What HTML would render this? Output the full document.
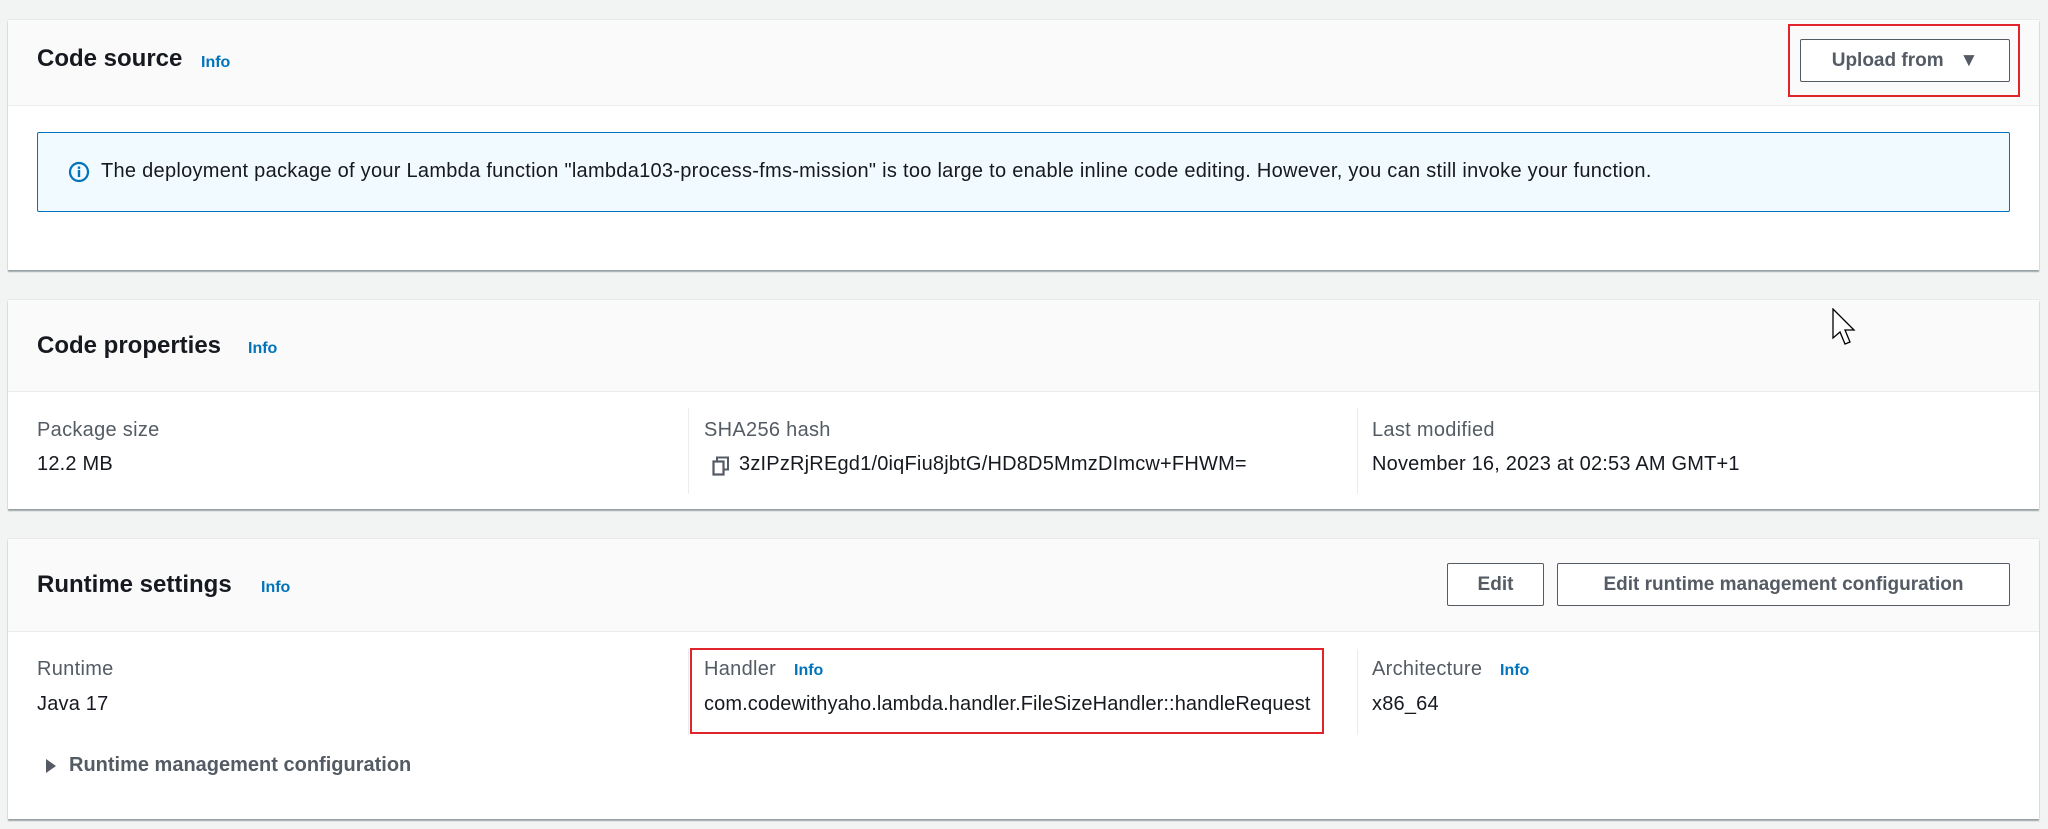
<!DOCTYPE html>
<html><head><meta charset="utf-8"><style>
*{margin:0;padding:0;box-sizing:border-box}
body{width:2048px;height:829px;background:#f2f3f3;font-family:"Liberation Sans",sans-serif;position:relative;overflow:hidden;color:#16191f}
.card{position:absolute;left:8px;width:2031px;background:#fff;box-shadow:0 2px 1px rgba(0,28,36,.35),0 0 1px rgba(0,28,36,.2)}
.hdr{position:absolute;left:0;top:0;width:100%;background:#fafafa;border-bottom:1px solid #eaeded}
.abs{position:absolute;white-space:nowrap}
.title{font-size:24px;font-weight:bold;color:#16191f}
.info{font-size:16px;font-weight:bold;color:#0073bb}
.lbl{font-size:20px;color:#545b64;letter-spacing:0.3px}
.val{font-size:20px;color:#16191f;letter-spacing:0.2px}
.btn{position:absolute;border:1px solid #545b64;border-radius:2px;background:#fff;font-size:19px;font-weight:bold;color:#545b64;display:flex;align-items:center;justify-content:center}
.div{position:absolute;width:1px;background:#eaeded}
.red{position:absolute;border:2px solid #e0242b}
</style></head><body>

<div class="card" style="top:20px;height:250px">
  <div class="hdr" style="height:86px"></div>
  <div class="abs title" style="left:29px;top:25px">Code source</div>
  <div class="abs info" style="left:193px;top:34px">Info</div>
  <div class="abs" style="left:29px;top:112px;width:1973px;height:80px;background:#f1faff;border:1px solid #0073bb;border-radius:2px"></div>
  <svg class="abs" style="left:60px;top:141px" width="22" height="22" viewBox="0 0 22 22"><circle cx="11" cy="11" r="9" fill="none" stroke="#0073bb" stroke-width="2.2"/><rect x="9.8" y="9" width="2.4" height="7" fill="#0073bb"/><rect x="9.8" y="5.5" width="2.4" height="2.4" fill="#0073bb"/></svg>
  <div class="abs val" style="left:93px;top:140px;letter-spacing:0.28px">The deployment package of your Lambda function "lambda103-process-fms-mission" is too large to enable inline code editing. However, you can still invoke your function.</div>
</div>
<div class="btn" style="left:1800px;top:39px;width:210px;height:43px">Upload from&nbsp;&nbsp;&nbsp;<span style="font-size:19px">&#9660;</span></div>
<div class="red" style="left:1788px;top:24px;width:232px;height:73px"></div>

<div class="card" style="top:300px;height:209px">
  <div class="hdr" style="height:92px"></div>
  <div class="abs title" style="left:29px;top:32px">Code properties</div>
  <div class="abs info" style="left:240px;top:40px">Info</div>
  <div class="div" style="left:680px;top:108px;height:86px"></div>
  <div class="div" style="left:1349px;top:108px;height:86px"></div>
  <div class="abs lbl" style="left:29px;top:119px">Package size</div>
  <div class="abs val" style="left:29px;top:153px">12.2 MB</div>
  <div class="abs lbl" style="left:696px;top:119px">SHA256 hash</div>
  <svg class="abs" style="left:704px;top:156px" width="18" height="20" viewBox="0 0 18 20"><rect x="5" y="1.5" width="11" height="12" fill="none" stroke="#545b64" stroke-width="2"/><rect x="1.5" y="5.5" width="10" height="13" fill="#fff" stroke="#545b64" stroke-width="2.2"/></svg>
  <div class="abs val" style="left:731px;top:153px">3zIPzRjREgd1/0iqFiu8jbtG/HD8D5MmzDImcw+FHWM=</div>
  <div class="abs lbl" style="left:1364px;top:119px">Last modified</div>
  <div class="abs val" style="left:1364px;top:153px">November 16, 2023 at 02:53 AM GMT+1</div>
</div>

<div class="card" style="top:539px;height:280px">
  <div class="hdr" style="height:93px"></div>
  <div class="abs title" style="left:29px;top:32px">Runtime settings</div>
  <div class="abs info" style="left:253px;top:40px">Info</div>
  <div class="div" style="left:680px;top:110px;height:86px"></div>
  <div class="div" style="left:1349px;top:110px;height:86px"></div>
  <div class="abs lbl" style="left:29px;top:119px">Runtime</div>
  <div class="abs val" style="left:29px;top:154px">Java 17</div>
  <div class="abs lbl" style="left:696px;top:119px">Handler</div>
  <div class="abs info" style="left:786px;top:123px">Info</div>
  <div class="abs val" style="left:696px;top:154px;letter-spacing:0.1px">com.codewithyaho.lambda.handler.FileSizeHandler::handleRequest</div>
  <div class="abs lbl" style="left:1364px;top:119px">Architecture</div>
  <div class="abs info" style="left:1492px;top:123px">Info</div>
  <div class="abs val" style="left:1364px;top:154px">x86_64</div>
  <svg class="abs" style="left:37px;top:219px" width="12" height="16" viewBox="0 0 12 16"><path d="M1 1 L11 8 L1 15 Z" fill="#545b64"/></svg>
  <div class="abs" style="left:61px;top:215px;font-size:20px;font-weight:bold;color:#545b64">Runtime management configuration</div>
</div>
<div class="btn" style="left:1447px;top:563px;width:97px;height:43px">Edit</div>
<div class="btn" style="left:1557px;top:563px;width:453px;height:43px">Edit runtime management configuration</div>
<div class="red" style="left:690px;top:648px;width:634px;height:86px"></div>

<svg class="abs" style="left:1832px;top:308px" width="26" height="40" viewBox="0 0 26 40"><path d="M1 1 L1 30 L8 24 L13 36 L18 34 L13 22 L22 22 Z" fill="#fff" stroke="#000" stroke-width="1.3"/></svg>
</body></html>
